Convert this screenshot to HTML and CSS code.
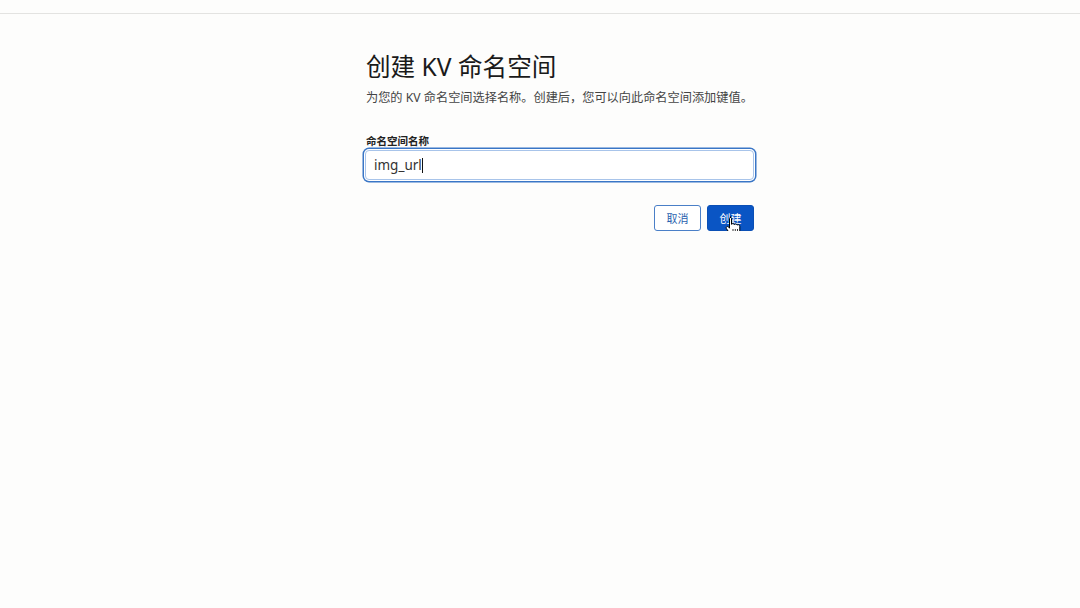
FILE: index.html
```html
<!DOCTYPE html>
<html lang="zh">
<head>
<meta charset="utf-8">
<link rel="stylesheet" href="styles.css">
</head>
<body>
<div class="topbar"></div>
<main class="page">
  <section class="form">
    <h1 class="title">创建 KV 命名空间</h1>
    <p class="desc">为您的 KV 命名空间选择名称。创建后，您可以向此命名空间添加键值。</p>
    <label class="label">命名空间名称</label>
    <div class="input"><span class="value">img_url</span><span class="caret"></span></div>
    <div class="actions">
      <button class="btn btn-secondary">取消</button>
      <button class="btn btn-primary">创建
        <svg class="pointer" width="16" height="20" viewBox="0 0 16 20">
          <path d="M5 1.2c.9 0 1.5.6 1.5 1.5v5.6c.3-.5.8-.7 1.4-.7.7 0 1.2.4 1.4 1 .3-.4.8-.6 1.3-.6.8 0 1.3.5 1.5 1.1.3-.3.7-.4 1.1-.4 1 0 1.6.7 1.6 1.6v3.8c0 2.9-2.1 5.2-5 5.2H8.4c-1.6 0-2.9-.8-3.8-2.1L1.4 12.6c-.4-.7-.2-1.5.4-1.9.6-.4 1.4-.3 1.8.3l.9 1.2V2.7c0-.9.6-1.5 1.5-1.5z" fill="#fff" stroke="#000" stroke-width="1"/>
          <path d="M8 13v3.5M10.3 13v3.5M12.5 13v3.5" stroke="#000" stroke-width="0.8"/>
        </svg>
      </button>
    </div>
  </section>
</main>
</body>
</html>
```
FILE: styles.css
```css
html, body {
  margin: 0;
  padding: 0;
  background: #fdfdfc;
  font-family: "Noto Sans", "Noto Sans CJK SC", sans-serif;
  color: #222;
}
.topbar {
  height: 13px;
  border-bottom: 1px solid #e3e3e1;
}
.page {
  padding-left: 363px;
}
.form {
  width: 392px;
  display: flex;
  flex-direction: column;
}
.title {
  margin: 37px 0 0 3px;
  font-size: 24.6px;
  font-weight: 400;
  line-height: 32px;
  color: #1a1a1a;
}
.desc {
  margin: 6px 0 0 3px;
  font-size: 12.2px;
  line-height: 18px;
  color: #444;
  white-space: nowrap;
}
.label {
  margin: 27px 0 0 3px;
  font-size: 10.5px;
  font-weight: 700;
  line-height: 14px;
  color: #222;
}
.input {
  margin-top: 2px;
  height: 28px;
  border: 1px solid #a8c4ea;
  border-radius: 4px;
  box-shadow: 0 0 0 1px #fff, 0 0 0 2.5px #3a76c6;
  margin-left: 2px;
  margin-right: 1px;
  background: #fff;
  display: flex;
  align-items: center;
  padding-left: 8px;
}
.value {
  font-size: 13.5px;
  color: #333;
}
.caret {
  display: inline-block;
  width: 1px;
  height: 15px;
  background: #111;
}
.actions {
  margin-top: 25px;
  display: flex;
  justify-content: flex-end;
  gap: 6px;
  padding-right: 1px;
}
.btn {
  position: relative;
  height: 26px;
  width: 47px;
  border-radius: 3px;
  font-family: "Noto Sans CJK SC", sans-serif;
  font-size: 11px;
  padding: 0;
  cursor: pointer;
}
.btn-secondary {
  background: #fff;
  border: 1px solid #4a7fc7;
  color: #2a5fae;
}
.btn-primary {
  background: #0a55c4;
  border: 1px solid #0a4fb5;
  color: #fff;
}
.pointer {
  position: absolute;
  left: 17px;
  top: 10px;
}
```
